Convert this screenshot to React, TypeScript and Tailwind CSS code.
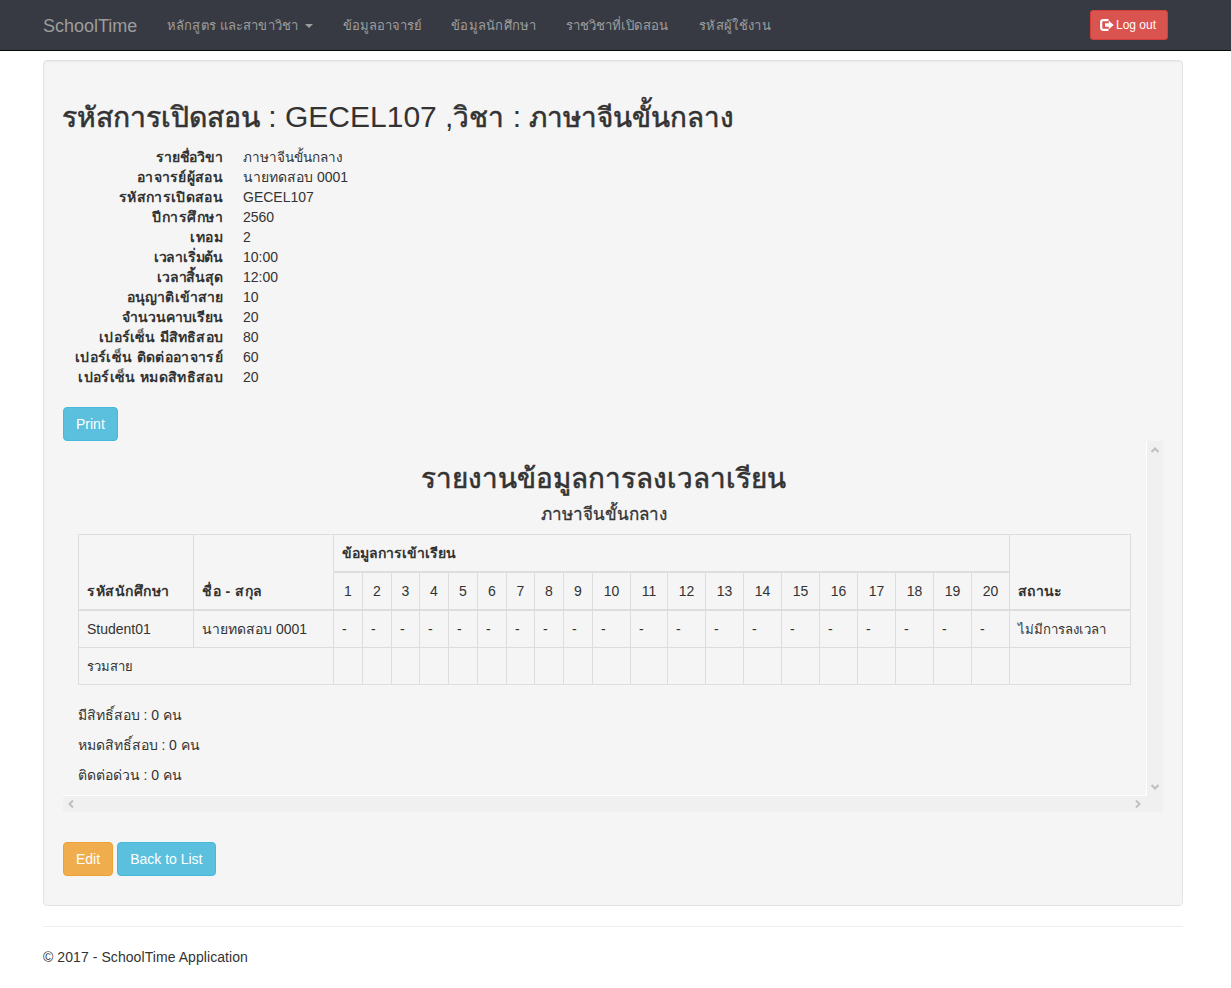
import React from "react";

const details = [
  ["รายชื่อวิขา", "ภาษาจีนขั้นกลาง", "tracking-[-0.12px]"],
  ["อาจารย์ผู้สอน", "นายทดสอบ 0001", "tracking-[0.3px]"],
  ["รหัสการเปิดสอน", "GECEL107", "tracking-[0.33px]"],
  ["ปีการศึกษา", "2560", "tracking-[0.5px]"],
  ["เทอม", "2", "tracking-[0.5px]"],
  ["เวลาเริ่มต้น", "10:00", "tracking-[-0.2px]"],
  ["เวลาสิ้นสุด", "12:00", "tracking-[-0.12px]"],
  ["อนุญาติเข้าสาย", "10", "tracking-[0.08px]"],
  ["จำนวนคาบเรียน", "20", "tracking-normal"],
  ["เปอร์เซ็น มีสิทธิสอบ", "80", "tracking-[0.2px]"],
  ["เปอร์เซ็น ติดต่ออาจารย์", "60", "tracking-[0.33px]"],
  ["เปอร์เซ็น หมดสิทธิสอบ", "20", "tracking-[0.35px]"],
];

const summary = ["มีสิทธิ์สอบ : 0 คน", "หมดสิทธิ์สอบ : 0 คน", "ติดต่อด่วน : 0 คน"];

const sessionWidths = [29, 29, 28, 29, 29, 29, 28, 29, 29, 38, 37, 38, 38, 38, 38, 38, 38, 38, 38, 38];

const cell = "border-r border-b border-[#ddd] p-2 align-top";
const head = "border-r border-b-2 border-[#ddd] p-2 align-bottom text-left";
const button = "h-[34px] rounded border px-3 leading-5 text-white";
const heavy = "[-webkit-text-stroke:0.6px_#333]";

function Arrow({ d }: { d: string }) {
  return (
    <svg width="8" height="8" viewBox="0 0 8 8" fill="none" stroke="#bfbfbf" strokeWidth="2">
      <path d={d} />
    </svg>
  );
}

export default function App() {
  return (
    <div className="min-h-[988px] bg-white font-['Liberation_Sans',sans-serif] text-sm leading-5 text-[#333]">
      <nav className="h-[51px] border-b border-[#080808] bg-[#373a42]">
        <div className="ml-[43px] flex h-[50px] w-[1140px] items-center text-[13px] text-[#9d9d9d]">
          <a className="w-[124px] pt-0.5 text-lg leading-5">SchoolTime</a>
          <a className="flex w-[176px] items-center pt-0.5 whitespace-nowrap">
            <span className="tracking-[0.15px]">หลักสูตร และสาขาวิชา</span>
            <svg className="ml-[7px]" width="8" height="4" viewBox="0 0 8 4">
              <path d="M0 0h8L4 4z" fill="currentColor" />
            </svg>
          </a>
          <a className="w-[108px] pt-0.5 whitespace-nowrap">ข้อมูลอาจารย์</a>
          <a className="w-[115px] pt-0.5 tracking-[0.25px] whitespace-nowrap">ข้อมูลนักศึกษา</a>
          <a className="w-[133px] pt-0.5 text-[13.200px] whitespace-nowrap">ราชวิชาที่เปิดสอน</a>
          <a className="pt-0.5 tracking-[0.35px] whitespace-nowrap">รหัสผู้ใช้งาน</a>
          <button className="mr-[15px] ml-auto flex h-[30px] w-[78px] items-center rounded-[3px] border border-[#d43f3a] bg-[#d9534f] pl-[9px] text-xs text-white">
            <svg className="mr-0.5 shrink-0" width="14" height="12" viewBox="0 0 14 12">
              <path d="M8.5 1.2H3.2Q1.2 1.2 1.2 3.2V8.8Q1.2 10.8 3.2 10.8H8.5" fill="none" stroke="white" strokeWidth="2.2" />
              <path d="M5 4.300h3.800V1.700L13.700 6 8.800 10.300V7.700H5z" fill="white" />
            </svg>
            Log out
          </button>
        </div>
      </nav>

      <main className="mt-[9px] ml-[43px] h-[846px] w-[1140px] rounded border border-[#e3e3e3] bg-[#f5f5f5] px-[19px] pt-[39px] shadow-[inset_0_1px_1px_rgba(0,0,0,0.05)]">
        <h2 className="-ml-px flex h-[47px] items-baseline text-[30px] leading-[33px] whitespace-pre">
          <span className={`text-[28.300px] ${heavy}`}>รหัสการเปิดสอน</span>
          <span> : GECEL107 ,</span>
          <span className={`text-[28px] ${heavy}`}>วิชา</span>
          <span> : </span>
          <span className={`text-[27.800px] ${heavy}`}>ภาษาจีนขั้นกลาง</span>
        </h2>
        <dl className="mb-5">
          {details.map(([term, value, tracking]) => (
            <div key={term} className="flex h-5 whitespace-nowrap">
              <dt className={`w-40 text-right font-bold ${tracking}`}>{term}</dt>
              <dd className="ml-5">
                {value === "ภาษาจีนขั้นกลาง" ? <span className="text-[13.5px]">{value}</span> : value}
              </dd>
            </div>
          ))}
        </dl>
        <button className={`${button} block border-[#46b8da] bg-[#5bc0de]`}>Print</button>

        <section className="grid h-[371px] w-[1100px] grid-cols-[1084px_16px] grid-rows-[355px_16px]">
          <div className="border-r border-b border-white pt-5 pl-[15px]">
            <div className="w-[1051px] text-center">
              <h2 className={`h-[43px] pt-px text-[27.800px] leading-[33px] ${heavy}`}>รายงานข้อมูลการลงเวลาเรียน</h2>
              <h4 className="h-[30px] pt-px text-[17px] leading-5 [-webkit-text-stroke:0.3px_#333]">ภาษาจีนขั้นกลาง</h4>
            </div>
            <table className="w-[1053px] table-fixed border-separate border-spacing-0 border-t border-l border-[#ddd]">
              <colgroup>
                <col className="w-[115px]" />
                <col className="w-[140px]" />
                {sessionWidths.map((width, i) => (
                  <col key={i} style={{ width }} />
                ))}
                <col className="w-[121px]" />
              </colgroup>
              <thead>
                <tr className="h-[38px]">
                  <th rowSpan={2} className={`${head} tracking-[0.55px]`}>รหัสนักศึกษา</th>
                  <th rowSpan={2} className={`${head} tracking-[0.55px]`}>ชื่อ - สกุล</th>
                  <th colSpan={20} className={head}>ข้อมูลการเข้าเรียน</th>
                  <th rowSpan={2} className={`${head} tracking-[0.35px]`}>สถานะ</th>
                </tr>
                <tr className="h-[38px]">
                  {sessionWidths.map((_, i) => (
                    <td key={i} className="border-r border-b-2 border-[#ddd] py-2 text-center align-bottom">{i + 1}</td>
                  ))}
                </tr>
              </thead>
              <tbody>
                <tr className="h-[37px]">
                  <td className={cell}>Student01</td>
                  <td className={cell}>นายทดสอบ 0001</td>
                  {sessionWidths.map((_, i) => (
                    <td key={i} className={cell}>-</td>
                  ))}
                  <td className={`${cell} whitespace-nowrap`}>
                    <span className="block h-5 pt-px text-[13.200px] leading-5">ไม่มีการลงเวลา</span>
                  </td>
                </tr>
                <tr className="h-[37px]">
                  <td colSpan={2} className={cell}>
                    <span className="block h-5 pt-px text-[13px] leading-5">รวมสาย</span>
                  </td>
                  {sessionWidths.map((_, i) => (
                    <td key={i} className={cell} />
                  ))}
                  <td className={cell} />
                </tr>
              </tbody>
            </table>
            <div className="mt-5 flex flex-col gap-2.5">
              {summary.map((line) => (
                <p key={line} className="tracking-[-0.05px]">{line}</p>
              ))}
            </div>
          </div>
          <div className="flex flex-col items-center justify-between bg-[#f0f0f0] py-[5px] pr-px">
            <Arrow d="M.5 6 4 2.500 7.500 6" />
            <Arrow d="M.5 2 4 5.500 7.500 2" />
          </div>
          <div className="flex items-center justify-between bg-[#f0f0f0] pr-[5px] pl-1">
            <Arrow d="M6 .5 2.500 4 6 7.500" />
            <Arrow d="M2 .5 5.500 4 2 7.500" />
          </div>
          <div className="bg-[#f0f0f0]" />
        </section>

        <div className="mt-[30px] flex gap-1">
          <button className={`${button} border-[#eea236] bg-[#f0ad4e]`}>Edit</button>
          <button className={`${button} border-[#46b8da] bg-[#5bc0de]`}>Back to List</button>
        </div>
      </main>

      <footer className="mt-5 ml-[43px] w-[1140px] border-t border-[#eee] pt-5">
        <p className="tracking-[0.07px]">© 2017 - SchoolTime Application</p>
      </footer>
    </div>
  );
}
